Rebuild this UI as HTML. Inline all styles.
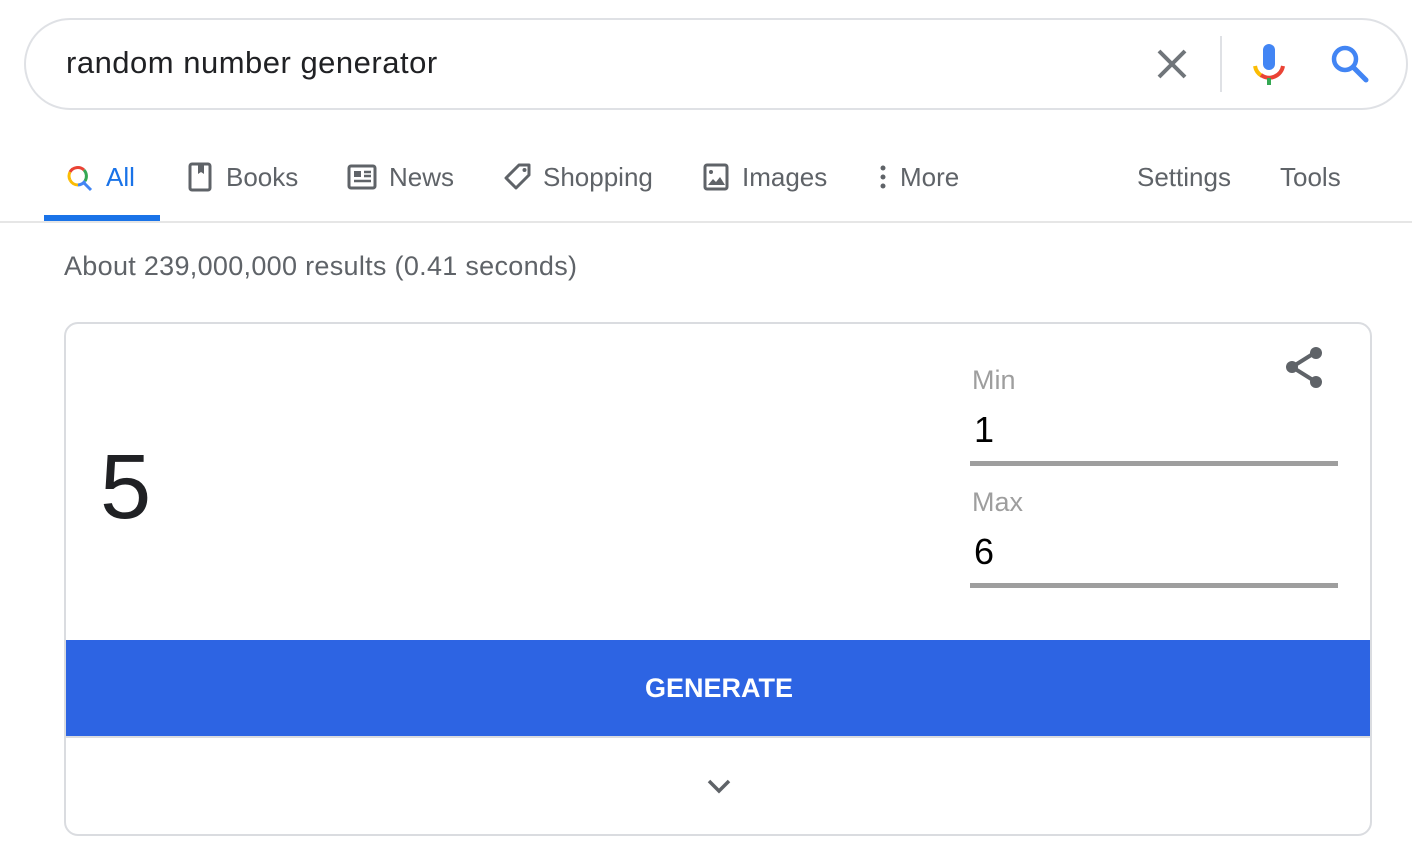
<!DOCTYPE html>
<html><head><meta charset="utf-8"><style>
*{margin:0;padding:0;box-sizing:border-box}
body{width:1412px;height:846px;background:#fff;font-family:"Liberation Sans",Arial,sans-serif;position:relative;overflow:hidden}
.a{position:absolute;white-space:nowrap}
.box{position:absolute;left:24px;top:18px;width:1384px;height:92px;border:2px solid #dfe1e5;border-radius:46px}
.tab{position:absolute;top:160px;font-size:26px;color:#5f6368;line-height:34px}
.card{position:absolute;left:64px;top:322px;width:1308px;height:514px;border:2px solid #dadce0;border-radius:14px;overflow:hidden}
</style></head><body>
<div class="box"></div>
<div class="a" style="left:66px;top:44px;font-size:31px;letter-spacing:0.5px;color:#202124;line-height:38px">random number generator</div>
<svg class="a" style="left:1156px;top:48px" width="32" height="32" viewBox="0 0 32 32"><path d="M3 3L29 29M29 3L3 29" stroke="#70757a" stroke-width="4"/></svg>
<div class="a" style="left:1220px;top:36px;width:2px;height:56px;background:#dfe1e5"></div>
<svg class="a" style="left:1252px;top:44px" width="34" height="42" viewBox="0 0 34 42">
<rect x="11" y="0" width="12" height="26" rx="6" fill="#4285f4"/>
<path d="M3 22a14 14 0 0 0 7 10" stroke="#fbbc04" stroke-width="4" fill="none"/>
<path d="M9 31a14 14 0 0 0 22-9" stroke="#ea4335" stroke-width="4" fill="none"/>
<rect x="15" y="34" width="4" height="7" fill="#34a853"/>
</svg>
<svg class="a" style="left:1330px;top:44px" width="40" height="40" viewBox="0 0 40 40"><circle cx="15" cy="15" r="11" stroke="#4285f4" stroke-width="4.5" fill="none"/><path d="M23 23L36 36" stroke="#4285f4" stroke-width="5" stroke-linecap="round"/></svg>

<svg class="a" style="left:66px;top:164px" width="28" height="28" viewBox="0 0 28 28">
<path d="M18 6a9 9 0 0 0-14 2" stroke="#ea4335" stroke-width="3" fill="none"/>
<path d="M4 8a9 9 0 0 0 0 8" stroke="#fbbc04" stroke-width="3" fill="none"/>
<path d="M4 16a9 9 0 0 0 8 5" stroke="#fbbc04" stroke-width="3" fill="none"/>
<path d="M18 6a9 9 0 0 1 1 11" stroke="#34a853" stroke-width="3" fill="none"/>
<path d="M17 18l8 8" stroke="#4285f4" stroke-width="3"/>
<path d="M12 21a9 9 0 0 0 7-4" stroke="#4285f4" stroke-width="3" fill="none"/>
</svg>
<div class="tab" style="left:106px;color:#1a73e8">All</div>
<div class="a" style="left:44px;top:215px;width:116px;height:6px;background:#1a73e8"></div>
<div class="a" style="left:0;top:221px;width:1412px;height:2px;background:#e6e6e6"></div>
<svg class="a" style="left:188px;top:162px" width="24" height="30" viewBox="0 0 24 30"><rect x="2" y="2" width="20" height="26" rx="2" stroke="#5f6368" stroke-width="3" fill="none"/><path d="M10 2h6v10l-3-2-3 2z" fill="#5f6368"/></svg>
<div class="tab" style="left:226px">Books</div>
<svg class="a" style="left:347px;top:164px" width="30" height="26" viewBox="0 0 30 26"><rect x="2" y="2" width="26" height="22" rx="2" stroke="#5f6368" stroke-width="3" fill="none"/><rect x="7" y="7" width="7" height="6" fill="#5f6368"/><path d="M17 8h7M17 12h7M7 17h17" stroke="#5f6368" stroke-width="2.5"/></svg>
<div class="tab" style="left:389px">News</div>
<svg class="a" style="left:503px;top:162px" width="30" height="30" viewBox="0 0 30 30"><path d="M16 3h10v10L13 26 3 16z" stroke="#5f6368" stroke-width="3" fill="none" stroke-linejoin="round"/><circle cx="21.5" cy="8" r="2" fill="#5f6368"/></svg>
<div class="tab" style="left:543px">Shopping</div>
<svg class="a" style="left:703px;top:163px" width="26" height="28" viewBox="0 0 26 28"><rect x="2" y="2" width="22" height="24" rx="2" stroke="#5f6368" stroke-width="3" fill="none"/><circle cx="8" cy="9" r="2" fill="#5f6368"/><path d="M5 22l5-6 3 3 4-5 5 8z" fill="#5f6368"/></svg>
<div class="tab" style="left:742px">Images</div>
<svg class="a" style="left:879px;top:165px" width="8" height="24" viewBox="0 0 8 24"><circle cx="4" cy="3" r="2.5" fill="#5f6368"/><circle cx="4" cy="12" r="2.5" fill="#5f6368"/><circle cx="4" cy="21" r="2.5" fill="#5f6368"/></svg>
<div class="tab" style="left:900px">More</div>
<div class="tab" style="left:1137px">Settings</div>
<div class="tab" style="left:1280px">Tools</div>

<div class="a" style="left:64px;top:250px;font-size:27px;letter-spacing:0.3px;color:#5f6368;line-height:32px">About 239,000,000 results (0.41 seconds)</div>

<div class="card">
<div class="a" style="left:34px;top:108px;font-size:92px;color:#202124;line-height:110px">5</div>
<svg class="a" style="left:1218px;top:22px" width="40" height="42" viewBox="0 0 40 42"><path d="M32 6L8 21l24 15" stroke="#5f6368" stroke-width="4" fill="none"/><circle cx="32" cy="7" r="6" fill="#5f6368"/><circle cx="8" cy="21" r="6" fill="#5f6368"/><circle cx="32" cy="36" r="6" fill="#5f6368"/></svg>
<div class="a" style="left:906px;top:40px;font-size:27px;color:#9e9e9e;line-height:32px">Min</div>
<div class="a" style="left:908px;top:86px;font-size:36px;color:#000;line-height:40px">1</div>
<div class="a" style="left:904px;top:137px;width:368px;height:5px;background:#9e9e9e"></div>
<div class="a" style="left:906px;top:162px;font-size:27px;color:#9e9e9e;line-height:32px">Max</div>
<div class="a" style="left:908px;top:208px;font-size:36px;color:#000;line-height:40px">6</div>
<div class="a" style="left:904px;top:259px;width:368px;height:5px;background:#9e9e9e"></div>
<div class="a" style="left:0;top:316px;width:1306px;height:96px;background:#2d64e3;color:#fff;font-size:27px;font-weight:bold;text-align:center;line-height:96px">GENERATE</div>
<div class="a" style="left:0;top:412px;width:1306px;height:2px;background:#dadce0"></div>
<svg class="a" style="left:640px;top:454px" width="26" height="16" viewBox="0 0 26 16"><path d="M3 3l10 10 10-10" stroke="#5f6368" stroke-width="3.5" fill="none"/></svg>
</div>
</body></html>
